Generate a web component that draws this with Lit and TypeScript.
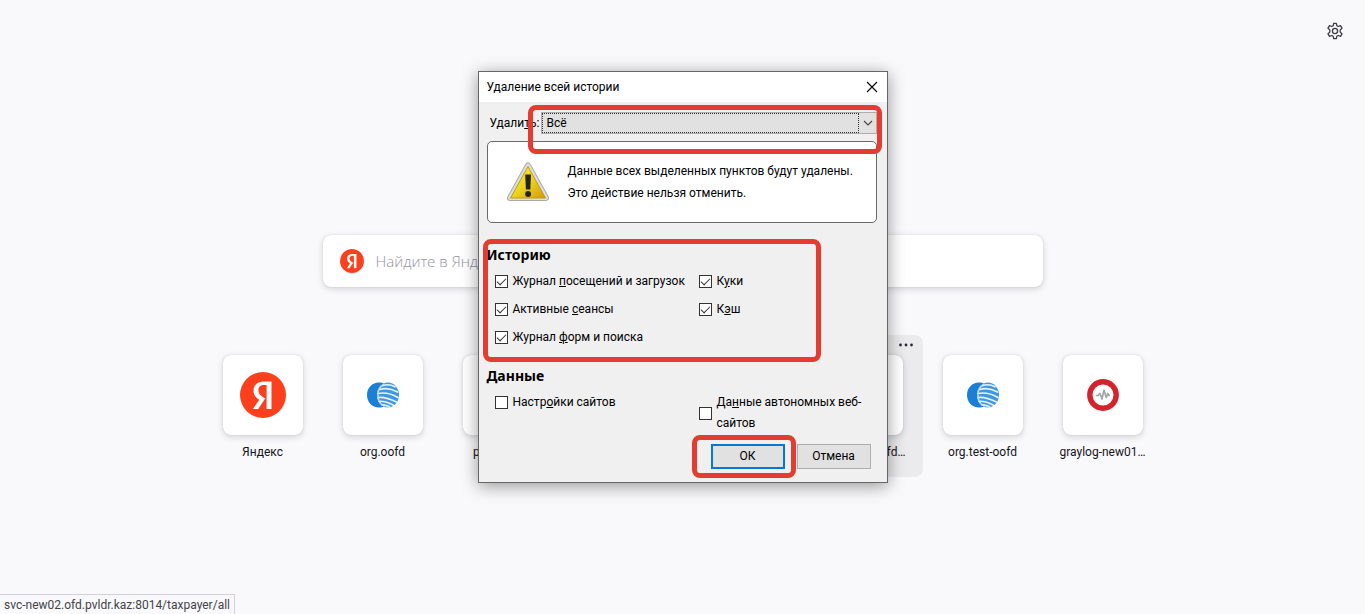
import { LitElement, html, css, nothing } from "lit";
import { customElement, property } from "lit/decorators.js";

type Glyph = "yandex" | "globe" | "graylog" | "none";

interface Site {
  label: string;
  glyph: Glyph;
  active?: boolean;
}

const SITES: Site[] = [
  { label: "Яндекс", glyph: "yandex" },
  { label: "org.oofd", glyph: "globe" },
  { label: "portal.oofd", glyph: "none" },
  { label: "", glyph: "none" },
  { label: "", glyph: "none" },
  { label: "svc-new02.ofd…", glyph: "none", active: true },
  { label: "org.test-oofd", glyph: "globe" },
  { label: "graylog-new01…", glyph: "graylog" },
];

const yandexIcon = (size: number) => html`
  <svg width=${size} height=${size} viewBox="0 0 46 46" aria-hidden="true">
    <circle cx="23" cy="23" r="23" fill="#fc3f1d" />
    <path
      fill="#fff"
      d="M26.6 37h4.9V9.4h-7.1c-7.1 0-10.9 3.7-10.9 9 0 4.3 2 6.8 5.7 9.4L12.900 37h5.300l7-10.500-2.400-1.600c-2.900-2-4.400-3.500-4.400-6.900 0-2.900 2.100-4.900 6-4.900h2.200z"
    />
  </svg>
`;

const globeIcon = html`
  <svg width="34" height="28" viewBox="0 0 34 28" aria-hidden="true">
    <path
      fill="#1b7fd6"
      d="M13 1.500c2 0 3.500.3 5 1-4.500 2-7 6-7 11.500s2.500 9.500 7 11.500c-1.500.7-3 1-5 1C6 26.500 1 21 1 14S6 1.500 13 1.500z"
    />
    <ellipse cx="22" cy="14" rx="11" ry="12.500" fill="#3f97df" />
    <g fill="none" stroke="#e6f2fc" stroke-width="1.700" stroke-linecap="round">
      <path d="M16.500 4.700c4-1.500 8-1.300 12.500 1" />
      <path d="M13.500 8.500c6-1.800 12-1 18 2.500" />
      <path d="M12 12.500c7-1.500 14 .5 20 4" />
      <path d="M12 16.500c7-.8 12.500 1.500 18.500 4.500" />
      <path d="M13 20.300c5-.3 10 1.500 14.500 4" />
      <path d="M16 24c3-.3 5 .7 7.500 1.800" />
    </g>
    <path d="M18 3c-4 2.500-6 6-6 11s2 8.500 5 10.500" fill="none" stroke="#c3def5" stroke-width="1.400" />
  </svg>
`;

const graylogIcon = html`
  <svg width="32" height="32" viewBox="0 0 32 32" aria-hidden="true">
    <circle cx="16" cy="16" r="13.200" fill="#fff" stroke="#d3242d" stroke-width="5.400" />
    <path
      d="M8.800 16.500h2.400l1.800-2 2 5.500 2-9 2.300 7.500 1.500-4 1 2h1.200"
      fill="none"
      stroke="#a3a7a9"
      stroke-width="1.700"
      stroke-linejoin="round"
    />
  </svg>
`;

@customElement("site-tile")
export class SiteTile extends LitElement {
  @property() label = "";
  @property() glyph: Glyph = "none";
  @property({ type: Boolean }) active = false;

  static styles = css`
    :host {
      display: block;
      flex: 0 0 120px;
    }
    .tile {
      position: relative;
      box-sizing: border-box;
      display: flex;
      flex-direction: column;
      align-items: center;
      gap: 8px;
      height: 142px;
      padding: 20px 8px 0;
      border-radius: 8px;
      color: #15141a;
      font-size: 12px;
      line-height: 18px;
    }
    .tile.active {
      background: #ebebed;
    }
    .card {
      display: grid;
      place-items: center;
      width: 80px;
      height: 80px;
      border-radius: 8px;
      background: #fff;
      box-shadow: 0 2px 6px rgba(58, 57, 68, 0.2), 0 0 1px rgba(58, 57, 68, 0.3);
    }
    .label {
      white-space: nowrap;
    }
    .more {
      position: absolute;
      top: 0;
      right: 7px;
      display: grid;
      place-items: center;
      width: 20px;
      height: 20px;
      padding: 0;
      border: 0;
      background: none;
    }
  `;

  render() {
    return html`
      <div class=${this.active ? "tile active" : "tile"}>
        <div class="card">
          ${this.glyph === "yandex" ? yandexIcon(46) : nothing}
          ${this.glyph === "globe" ? globeIcon : nothing}
          ${this.glyph === "graylog" ? graylogIcon : nothing}
        </div>
        <span class="label">${this.label}</span>
        ${this.active
          ? html`<button class="more" type="button" aria-label="Меню">
              <svg width="16" height="16" viewBox="0 0 16 16" fill="#2b2a33">
                <circle cx="2.500" cy="8" r="1.400" />
                <circle cx="8" cy="8" r="1.400" />
                <circle cx="13.500" cy="8" r="1.400" />
              </svg>
            </button>`
          : nothing}
      </div>
    `;
  }
}

@customElement("clear-history-dialog")
export class ClearHistoryDialog extends LitElement {
  static styles = css`
    :host {
      display: block;
      box-sizing: border-box;
      width: 410px;
      border: 1px solid #666;
      background: #f0f0f0;
      box-shadow: 0 3px 16px rgba(0, 0, 0, 0.4);
      color: #000;
      font-size: 12px;
      line-height: 21px;
    }
    .titlebar {
      display: flex;
      align-items: center;
      justify-content: space-between;
      height: 30px;
      padding: 0 8px;
      background: #fff;
    }
    .close {
      display: grid;
      place-items: center;
      width: 14px;
      height: 14px;
      padding: 0;
      border: 0;
      background: none;
    }
    .body {
      display: flex;
      flex-direction: column;
      padding: 10px 10px 13px 8px;
    }
    .range {
      display: flex;
      align-items: center;
      justify-content: space-between;
      padding-left: 3px;
    }
    .picker {
      position: relative;
      width: 336px;
    }
    .picker select {
      display: block;
      appearance: none;
      box-sizing: border-box;
      width: 100%;
      height: 22px;
      padding: 0 24px 0 5px;
      border: 1px solid #adadad;
      border-radius: 0;
      background: #e1e1e1;
      color: #000;
      font: inherit;
      line-height: 20px;
    }
    .picker .focus {
      position: absolute;
      inset: 1px 18px 1px 1px;
      border: 1px dotted #333;
      pointer-events: none;
    }
    .picker .arrow {
      position: absolute;
      top: 7px;
      right: 4px;
      pointer-events: none;
    }
    .marked {
      position: relative;
    }
    .mark {
      position: absolute;
      border: 5px solid #e63b30;
      border-radius: 8px;
      pointer-events: none;
    }
    .mark.range-mark {
      inset: -7px -5px -20px -13px;
    }
    .mark.history-mark {
      inset: -6px 56px -14px -4px;
    }
    .mark.ok-mark {
      inset: -9px -11px -9px -19px;
    }
    .warning {
      box-sizing: border-box;
      display: flex;
      align-items: center;
      gap: 18px;
      height: 82px;
      margin-top: 7px;
      padding: 0 18px;
      border: 1px solid #696969;
      border-radius: 5px;
      background: #fff;
      line-height: 22px;
    }
    .warning svg {
      flex: none;
    }
    .warning p {
      margin: 0;
      white-space: nowrap;
    }
    .group {
      min-width: 0;
      margin: 22px 0 0;
      padding: 0;
      border: 0;
    }
    .group.second {
      margin-top: 18px;
    }
    .heading {
      margin: 0;
      font-family: "Noto Sans", sans-serif;
      font-size: 14px;
      font-weight: 700;
      line-height: 20px;
    }
    .options {
      display: grid;
      grid-template-columns: 204px 1fr;
      row-gap: 7px;
      padding: 6px 0 0 8px;
    }
    .options label {
      display: flex;
      align-items: center;
      gap: 5px;
    }
    .options label.top {
      align-self: start;
    }
    .options input {
      appearance: none;
      flex: none;
      display: grid;
      place-items: center;
      width: 13px;
      height: 13px;
      margin: 0;
      border: 1px solid #333;
      background: #fff;
    }
    .options input:checked::before {
      content: "";
      width: 8px;
      height: 4px;
      margin-bottom: 3px;
      border: solid #333;
      border-width: 0 0 1px 1px;
      transform: rotate(-45deg);
    }
    .actions {
      display: flex;
      justify-content: flex-end;
      gap: 12px;
      margin-top: 10px;
      padding-right: 6px;
    }
    .action {
      box-sizing: border-box;
      width: 74px;
      height: 25px;
      padding: 0;
      border: 1px solid #adadad;
      background: #e1e1e1;
      color: #000;
      font: inherit;
    }
    .action.primary {
      display: block;
      border: 2px solid #0078d7;
    }
  `;

  private option(before: string, key: string, after: string, checked: boolean, top = false) {
    return html`<label class=${top ? "top" : ""}>
      <input type="checkbox" .checked=${checked} />
      <span>${before}<u>${key}</u>${after}</span>
    </label>`;
  }

  render() {
    return html`
      <div class="titlebar">
        <span>Удаление всей истории</span>
        <button class="close" type="button" aria-label="Закрыть">
          <svg width="12" height="12" viewBox="0 0 12 12">
            <path d="M1 1l10 10M11 1L1 11" stroke="#000" stroke-width="1.100" />
          </svg>
        </button>
      </div>
      <div class="body">
        <div class="range">
          <label for="range">Удали<u>т</u>ь:</label>
          <div class="picker">
            <select id="range">
              <option>Всё</option>
            </select>
            <span class="focus"></span>
            <svg class="arrow" width="10" height="8" viewBox="0 0 10 8">
              <path d="M1 2l4 4 4-4" fill="none" stroke="#444" stroke-width="1.100" />
            </svg>
            <span class="mark range-mark"></span>
          </div>
        </div>

        <div class="warning">
          <svg width="44" height="40" viewBox="0 0 44 40" aria-hidden="true">
            <defs>
              <linearGradient id="amber" x1="0" y1="0" x2="1" y2="1">
                <stop offset="0" stop-color="#f7ee3a" />
                <stop offset="0.500" stop-color="#ecd41f" />
                <stop offset="1" stop-color="#d39a08" />
              </linearGradient>
            </defs>
            <path
              d="M22 3.500L40 36H4z"
              fill="#d5d5d5"
              stroke="#a9a9ad"
              stroke-width="6"
              stroke-linejoin="round"
            />
            <path
              d="M22 3.500L40 36H4z"
              fill="#d5d5d5"
              stroke="#dededf"
              stroke-width="4"
              stroke-linejoin="round"
            />
            <path
              d="M22 4.500L39.500 36H4.500z"
              fill="url(#amber)"
              stroke="#c39a12"
              stroke-width="1"
              stroke-linejoin="round"
            />
            <path d="M19.200 12.500h5.800l-.7 15h-4.400z" fill="#26241a" />
            <circle cx="22.100" cy="32" r="2.900" fill="#26241a" />
          </svg>
          <div>
            <p>Данные всех выделенных пунктов будут удалены.</p>
            <p>Это действие нельзя отменить.</p>
          </div>
        </div>

        <section class="group marked">
          <h2 class="heading">Историю</h2>
          <div class="options">
            ${this.option("Журнал ", "п", "осещений и загрузок", true)}
            ${this.option("К", "у", "ки", true)}
            ${this.option("Активные ", "с", "еансы", true)}
            ${this.option("К", "э", "ш", true)}
            ${this.option("Журнал ", "ф", "орм и поиска", true)}
          </div>
          <span class="mark history-mark"></span>
        </section>

        <section class="group second">
          <h2 class="heading">Данные</h2>
          <div class="options">
            ${this.option("Настр", "о", "йки сайтов", false, true)}
            ${this.option("Да", "н", "ные автономных веб-сайтов", false)}
          </div>
        </section>

        <div class="actions">
          <div class="marked">
            <button class="action primary" type="button">ОК</button>
            <span class="mark ok-mark"></span>
          </div>
          <button class="action" type="button">Отмена</button>
        </div>
      </div>
    `;
  }
}

@customElement("app-root")
export class AppRoot extends LitElement {
  static styles = css`
    :host {
      position: relative;
      display: flex;
      flex-direction: column;
      box-sizing: border-box;
      min-height: 100vh;
      overflow: hidden;
      background: #f9f9fb;
      font-family: Roboto, "Noto Sans", sans-serif;
    }
    .toolbar {
      display: flex;
      justify-content: flex-end;
      padding: 22px 21px 0 0;
    }
    .gear {
      display: grid;
      place-items: center;
      width: 18px;
      height: 18px;
      padding: 0;
      border: 0;
      background: none;
    }
    .search {
      box-sizing: border-box;
      display: flex;
      align-items: center;
      align-self: center;
      gap: 12px;
      width: 720px;
      max-width: 100%;
      height: 52px;
      margin-top: 195px;
      padding: 0 17px;
      border-radius: 8px;
      background: #fff;
      box-shadow: 0 2px 6px rgba(58, 57, 68, 0.2), 0 0 1px rgba(58, 57, 68, 0.3);
    }
    .search input {
      flex: 1;
      min-width: 0;
      padding: 0;
      border: 0;
      outline: 0;
      background: none;
      color: #15141a;
      font: 15px "Open Sans", sans-serif;
    }
    .search input::placeholder {
      color: #93939c;
      font-weight: 300;
      opacity: 1;
    }
    .sites {
      display: flex;
      justify-content: center;
      margin-top: 48px;
    }
    .overlay {
      position: absolute;
      inset: 0;
      display: flex;
      align-items: flex-start;
      justify-content: center;
      padding-top: 71px;
    }
    .status {
      position: absolute;
      bottom: 0;
      left: 0;
      padding: 1px 4px 0;
      border: solid #d2d2d6;
      border-width: 1px 1px 0 0;
      background: #f9f9fb;
      color: #444349;
      font-size: 12px;
      line-height: 18px;
    }
  `;

  private gear() {
    return html`<svg width="18" height="18" viewBox="0 0 18 18" fill="none" stroke="#3c3b44" stroke-width="1.300">
      <circle cx="9" cy="9" r="2.600" />
      <path
        stroke-linejoin="round"
        d="M7.700 1.400h2.600l.5 2.300 1.400.8 2.300-.8 1.500 2.500-1.800 1.700v2.200l1.800 1.700-1.500 2.500-2.300-.8-1.400.8-.5 2.300H7.700l-.5-2.300-1.400-.8-2.300.8L2 11.800l1.800-1.700V7.900L2 6.200l1.500-2.500 2.300.8 1.400-.8z"
      />
    </svg>`;
  }

  render() {
    return html`
      <header class="toolbar">
        <button class="gear" type="button" aria-label="Настройки">${this.gear()}</button>
      </header>
      <form class="search" role="search">
        ${yandexIcon(24)}
        <input type="text" aria-label="Поиск" placeholder="Найдите в Яндекс" />
      </form>
      <nav class="sites">
        ${SITES.map(
          (s) => html`<site-tile .label=${s.label} .glyph=${s.glyph} .active=${!!s.active}></site-tile>`
        )}
      </nav>
      <div class="overlay">
        <clear-history-dialog role="dialog" aria-label="Удаление всей истории"></clear-history-dialog>
      </div>
      <div class="status">svc-new02.ofd.pvldr.kaz:8014/taxpayer/all</div>
    `;
  }
}
